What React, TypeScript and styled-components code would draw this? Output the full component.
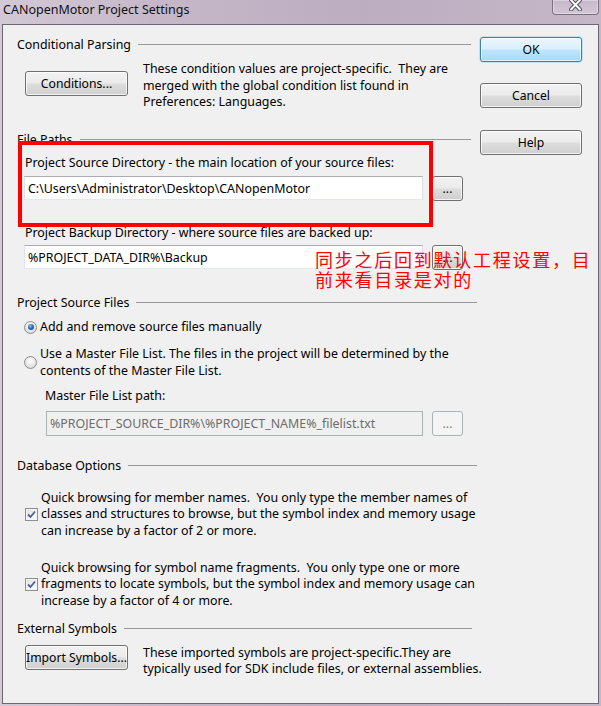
import React from "react";
import styled, { createGlobalStyle, css } from "styled-components";

const Global = createGlobalStyle`
  html, body { margin: 0; padding: 0; background: #c4b6c8; }
  body { width: 601px; height: 706px; overflow: hidden; }
`;

const UI = `"Noto Sans", "DejaVu Sans", sans-serif`;

const Window = styled.div`
  position: relative;
  width: 601px;
  height: 706px;
  box-sizing: border-box;
  padding: 0 2px 2px 2px;
  display: flex;
  flex-direction: column;
  background: linear-gradient(90deg, #d3c8d6 0%, #c6b8c9 25%, #bcadc0 60%, #c5b6c8 100%);
  font-family: ${UI};
  font-size: 12.4px;
  color: #000;
`;

const TitleBar = styled.div`
  height: 24px;
  display: flex;
  justify-content: space-between;
  align-items: flex-start;
`;

const Title = styled.div`
  padding-left: 1px;
  font-size: 12.5px;
  line-height: 20px;
  color: #111;
`;

const CloseButton = styled.div`
  width: 47px;
  height: 15px;
  box-sizing: border-box;
  border: 1px solid rgba(96, 84, 100, 0.75);
  border-top: none;
  border-radius: 0 0 4px 4px;
  background: linear-gradient(rgba(255, 255, 255, 0.05), rgba(255, 255, 255, 0.25));
  box-shadow: inset 0 0 0 1px rgba(255, 255, 255, 0.35);
  display: flex;
  justify-content: center;
  align-items: flex-start;
`;

const Client = styled.div`
  position: relative;
  flex: 1;
  border: 1px solid #6d6870;
  background: #f0f0f0;
  display: grid;
  grid-template-columns: 460px 102px;
  column-gap: 3px;
  padding-left: 14px;
  align-items: start;
`;

const MainCol = styled.div`
  display: flex;
  flex-direction: column;
`;

const SideCol = styled.div`
  display: flex;
  flex-direction: column;
  padding-top: 12px;
`;

const GroupHeader = styled.div<{ $mt: number; $inset: number }>`
  display: flex;
  align-items: center;
  height: 16px;
  margin-top: ${(p) => p.$mt}px;
  white-space: nowrap;
  &::after {
    content: "";
    flex: 1;
    height: 1px;
    margin-left: 7px;
    margin-right: ${(p) => p.$inset}px;
    background: #999999;
  }
`;

const Row = styled.div<{ $mt: number; $pl: number; $align?: string; $gap?: number }>`
  display: flex;
  align-items: ${(p) => p.$align || "flex-start"};
  gap: ${(p) => p.$gap ?? 0}px;
  margin-top: ${(p) => p.$mt}px;
  padding-left: ${(p) => p.$pl}px;
`;

const Label = styled.div<{ $mt: number; $pl: number }>`
  margin-top: ${(p) => p.$mt}px;
  padding-left: ${(p) => p.$pl}px;
  line-height: 16px;
  white-space: nowrap;
`;

const Para = styled.div<{ $ml?: number }>`
  margin-left: ${(p) => p.$ml ?? 0}px;
  line-height: 16.7px;
  white-space: pre;
`;

const Button = styled.button<{ $w: number; $mt?: number; $primary?: boolean; $disabled?: boolean }>`
  width: ${(p) => p.$w}px;
  height: 25px;
  flex: none;
  margin: ${(p) => p.$mt ?? 0}px 0 0 0;
  padding: 0;
  box-sizing: border-box;
  border: 1px solid #707070;
  border-radius: 3px;
  background: linear-gradient(#f2f2f2 0%, #ebebeb 48%, #dddddd 52%, #cfcfcf 100%);
  box-shadow: inset 0 0 0 1px rgba(255, 255, 255, 0.75);
  font-family: ${UI};
  font-size: 12.2px;
  color: #000;
  white-space: nowrap;
  ${(p) =>
    p.$primary &&
    css`
      border-color: #3c7fb1;
      background: linear-gradient(#eaf6fd 0%, #d9f0fc 48%, #bee6fd 52%, #a7d9f5 100%);
      box-shadow: inset 0 0 0 1px rgba(255, 255, 255, 0.6), 0 0 0 0.5px #8ed3f5;
    `}
  ${(p) =>
    p.$disabled &&
    css`
      border-color: #adb2b5;
      background: #f4f4f4;
      box-shadow: none;
      color: #838383;
    `}
`;

const TextField = styled.input<{ $w: number; $disabled?: boolean }>`
  width: ${(p) => p.$w}px;
  height: 24px;
  flex: none;
  box-sizing: border-box;
  margin: 0;
  padding: 0 0 0 3px;
  border: 1px solid;
  border-color: #abadb3 #dbdfe6 #e3e9ef #e2e3ea;
  background: #fff;
  outline: none;
  font-family: ${UI};
  font-size: 12.4px;
  color: #000;
  ${(p) =>
    p.$disabled &&
    css`
      height: 25px;
      border-color: #adb2b5;
      background: #f0f0f0;
      color: #6d6d6d;
    `}
`;

const Radio = styled.span<{ $checked?: boolean }>`
  width: 13px;
  height: 13px;
  flex: none;
  box-sizing: border-box;
  border-radius: 50%;
  border: 1px solid #8c8c8c;
  background: radial-gradient(circle at 50% 35%, #ffffff 0%, #e6e6e6 55%, #cfcfcf 100%);
  display: grid;
  place-items: center;
  ${(p) =>
    p.$checked &&
    css`
      &::after {
        content: "";
        width: 6px;
        height: 6px;
        border-radius: 50%;
        background: radial-gradient(circle at 40% 35%, #8cc2f0 0%, #2a6fbf 45%, #0d3c76 100%);
      }
    `}
`;

const CheckBox = styled.span`
  width: 13px;
  height: 13px;
  flex: none;
  box-sizing: border-box;
  border: 1px solid #8e8f8f;
  background: linear-gradient(135deg, #dcdcdc 0%, #f4f4f4 60%, #ffffff 100%);
  box-shadow: inset 0 0 0 1px #f4f4f4;
  display: grid;
  place-items: center;
`;

const RedBox = styled.div`
  position: absolute;
  left: 15px;
  top: 116px;
  width: 415px;
  height: 86px;
  box-sizing: border-box;
  border: 4px solid #ff0000;
  pointer-events: none;
`;

const Note = styled.div`
  position: absolute;
  left: 312px;
  top: 224px;
  font-family: "Noto Sans CJK SC", sans-serif;
  font-size: 18px;
  line-height: 20px;
  letter-spacing: 1.75px;
  color: #ff0000;
  white-space: pre;
`;

const Lines = ({ lines, ml }: { lines: string[]; ml?: number }) => (
  <Para $ml={ml}>{lines.join("\n")}</Para>
);

const CheckMark = () => (
  <svg width="9" height="9" viewBox="0 0 9 9">
    <path d="M1 4.5 L3.5 7 L8 1.5" fill="none" stroke="#4a5f97" strokeWidth="1.8" />
  </svg>
);

const CloseGlyph = () => (
  <svg width="13" height="11" viewBox="0 0 13 11">
    <path d="M2 0 L11 9.5 M11 0 L2 9.5" stroke="#5a5060" strokeWidth="4" strokeLinecap="round" />
    <path d="M2 0 L11 9.5 M11 0 L2 9.5" stroke="#ffffff" strokeWidth="2" strokeLinecap="round" />
  </svg>
);

export default function App() {
  return (
    <>
      <Global />
      <Window>
        <TitleBar>
          <Title>CANopenMotor Project Settings</Title>
          <CloseButton>
            <CloseGlyph />
          </CloseButton>
        </TitleBar>
        <Client>
          <MainCol>
            <GroupHeader $mt={11} $inset={6}>Conditional Parsing</GroupHeader>
            <Row $mt={9} $pl={8}>
              <Button $w={103} $mt={10}>Conditions...</Button>
              <Lines
                ml={15}
                lines={[
                  "These condition values are project-specific.  They are",
                  "merged with the global condition list found in",
                  "Preferences: Languages.",
                ]}
              />
            </Row>

            <GroupHeader $mt={20} $inset={6}>File Paths</GroupHeader>
            <Label $mt={8} $pl={8}>Project Source Directory - the main location of your source files:</Label>
            <Row $mt={5} $pl={7} $gap={9}>
              <TextField $w={399} readOnly value="C:\Users\Administrator\Desktop\CANopenMotor" />
              <Button $w={31}>...</Button>
            </Row>
            <Label $mt={24} $pl={8}>Project Backup Directory - where source files are backed up:</Label>
            <Row $mt={4} $pl={7} $gap={9}>
              <TextField $w={399} readOnly value="%PROJECT_DATA_DIR%\Backup" />
              <Button $w={31}>...</Button>
            </Row>

            <GroupHeader $mt={24} $inset={0}>Project Source Files</GroupHeader>
            <Row $mt={9} $pl={7} $gap={3} $align="center">
              <Radio $checked />
              <Label $mt={0} $pl={0}>Add and remove source files manually</Label>
            </Row>
            <Row $mt={11} $pl={7} $gap={3} $align="center">
              <Radio />
              <Lines
                lines={[
                  "Use a Master File List. The files in the project will be determined by the",
                  "contents of the Master File List.",
                ]}
              />
            </Row>
            <Label $mt={8} $pl={28}>Master File List path:</Label>
            <Row $mt={7} $pl={29} $gap={9}>
              <TextField $w={377} $disabled readOnly value="%PROJECT_SOURCE_DIR%\%PROJECT_NAME%_filelist.txt" />
              <Button $w={31} $disabled>...</Button>
            </Row>

            <GroupHeader $mt={22} $inset={0}>Database Options</GroupHeader>
            <Row $mt={16} $pl={8} $gap={3} $align="center">
              <CheckBox>
                <CheckMark />
              </CheckBox>
              <Lines
                lines={[
                  "Quick browsing for member names.  You only type the member names of",
                  "classes and structures to browse, but the symbol index and memory usage",
                  "can increase by a factor of 2 or more.",
                ]}
              />
            </Row>
            <Row $mt={20} $pl={8} $gap={3} $align="center">
              <CheckBox>
                <CheckMark />
              </CheckBox>
              <Lines
                lines={[
                  "Quick browsing for symbol name fragments.  You only type one or more",
                  "fragments to locate symbols, but the symbol index and memory usage can",
                  "increase by a factor of 4 or more.",
                ]}
              />
            </Row>

            <GroupHeader $mt={11} $inset={5}>External Symbols</GroupHeader>
            <Row $mt={8} $pl={8}>
              <Button $w={103}>Import Symbols...</Button>
              <Lines
                ml={15}
                lines={[
                  "These imported symbols are project-specific.They are",
                  "typically used for SDK include files, or external assemblies.",
                ]}
              />
            </Row>
          </MainCol>

          <SideCol>
            <Button $w={102} $primary>OK</Button>
            <Button $w={102} $mt={21}>Cancel</Button>
            <Button $w={102} $mt={22}>Help</Button>
          </SideCol>

          <RedBox />
          <Note>{"同步之后回到默认工程设置，目\n前来看目录是对的"}</Note>
        </Client>
      </Window>
    </>
  );
}
